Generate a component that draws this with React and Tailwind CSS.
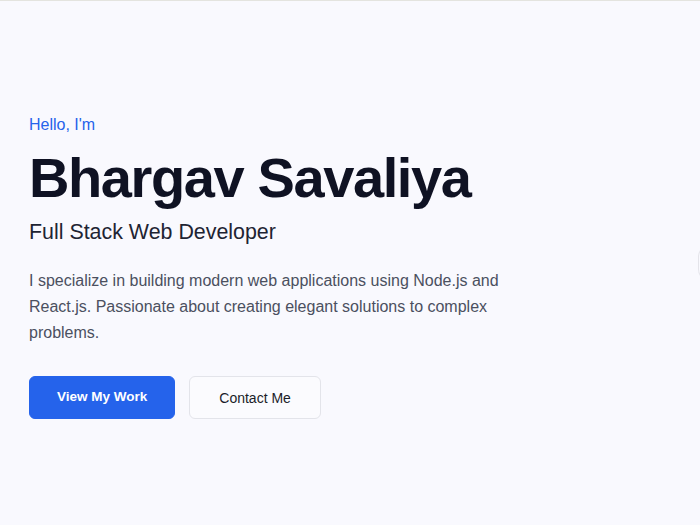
export default function App() {
  return (
    <div
      className="relative min-h-screen overflow-hidden border-t border-[#e4e4df] bg-[#f9f9fe] text-gray-900"
      style={{ fontFamily: '"Liberation Sans", Arial, sans-serif' }}
    >
      {/* Hero */}
      <section className="px-[29px] pt-[112px]">
        <div className="max-w-lg">
          <p className="mb-[6px] text-base leading-6 text-[#2563eb]">Hello, I'm</p>
          <h1 className="text-[56px] font-bold leading-tight tracking-tight text-[#0f1223]">
            Bhargav Savaliya
          </h1>
          <h2 className="mt-[5px] text-[21.4px] leading-7 text-[#1e2433]">Full Stack Web Developer</h2>
          <p className="mt-[22px] text-base leading-relaxed text-[#4b5060]">
            I specialize in building modern web applications using Node.js and React.js. Passionate
            about creating elegant solutions to complex problems.
          </p>
          <div className="mt-[30px] flex gap-[14px]">
            <button className="flex h-[43px] items-center rounded-md border border-[#2563eb] bg-[#2563eb] px-[27px] text-[13.5px] font-semibold text-white">
              View My Work
            </button>
            <button className="flex h-[43px] items-center rounded-md border border-[#e3e4ea] bg-[#fbfbfe] px-[29px] text-sm text-[#1a1d29]">
              Contact Me
            </button>
          </div>
        </div>
      </section>

      {/* edge of the side card peeking in */}
      <div className="absolute left-[698px] top-[244px] h-[36px] w-[40px] rounded-l-xl border-l border-[#e4e4ea]" />
    </div>
  );
}
